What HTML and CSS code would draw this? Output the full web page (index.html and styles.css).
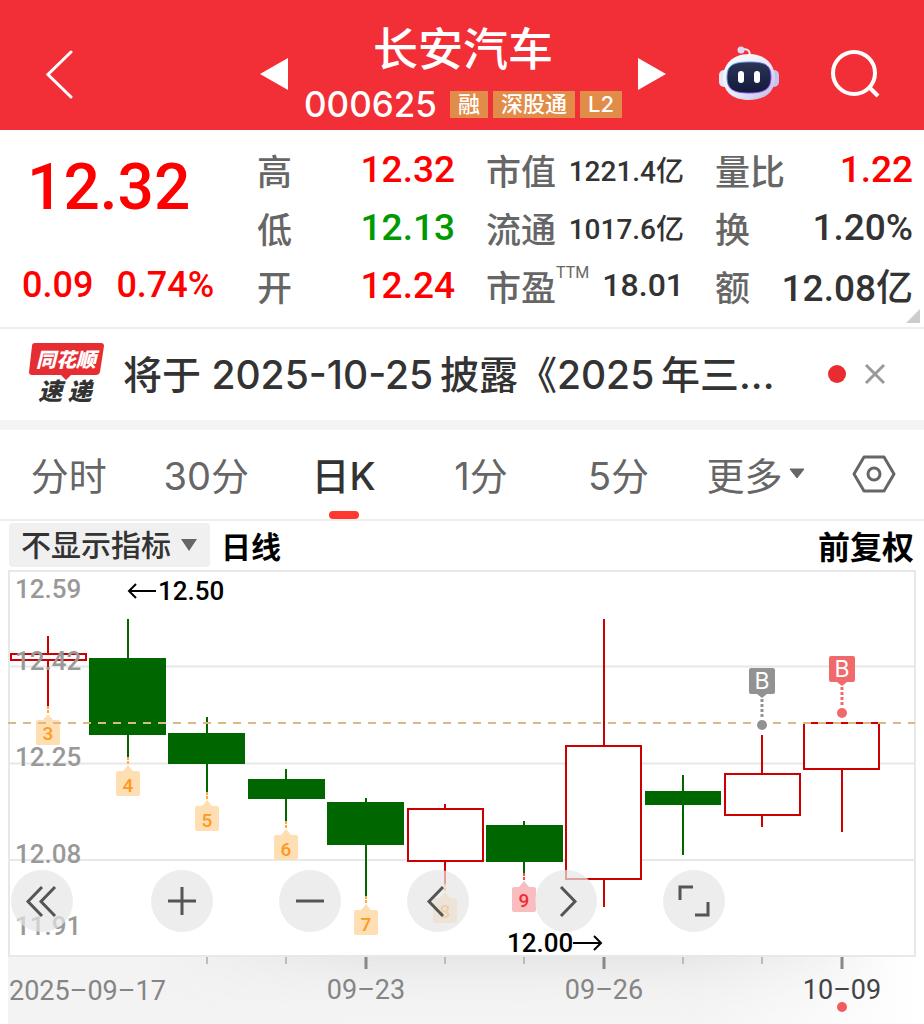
FILE: index.html
```
<!DOCTYPE html>
<html lang="zh-CN">
<head>
<meta charset="utf-8">
<meta name="viewport" content="width=device-width, initial-scale=1">
<title>长安汽车 000625</title>
<link rel="stylesheet" href="styles.css">
</head>
<body>
<header class="topbar">
  <button class="icon-btn back" aria-label="返回">
    <svg width="28" height="50" viewBox="0 0 28 50"><path d="M25 3 2 25.500 25 48" fill="none" stroke="#fff" stroke-width="3" stroke-linecap="round"/></svg>
  </button>
  <div class="stock">
    <button class="icon-btn" aria-label="上一只"><svg width="28" height="32" viewBox="0 0 28 32"><path d="M0 16 28 0V32Z" fill="#fff"/></svg></button>
    <div class="stock-id">
      <h1 class="stock-name">长安汽车</h1>
      <div class="stock-meta">
        <span class="code">000625</span>
        <span class="tag">融</span><span class="tag">深股通</span><span class="tag">L2</span>
      </div>
    </div>
    <button class="icon-btn" aria-label="下一只"><svg width="28" height="32" viewBox="0 0 28 32"><path d="M28 16 0 0V32Z" fill="#fff"/></svg></button>
  </div>
  <div class="tools">
    <button class="icon-btn" aria-label="智能助手">
      <svg width="60" height="56" viewBox="0 0 60 56">
        <defs>
          <linearGradient id="shell" x1="0" y1="0" x2="1" y2="1"><stop offset="0" stop-color="#fff"/><stop offset=".55" stop-color="#e9e9f8"/><stop offset="1" stop-color="#b9b8e6"/></linearGradient>
          <linearGradient id="rim" x1="0" y1="0" x2="1" y2="1"><stop offset="0" stop-color="#58d4ee"/><stop offset=".5" stop-color="#6a4be8"/><stop offset="1" stop-color="#b04af0"/></linearGradient>
          <linearGradient id="visor" x1="0" y1="0" x2="0" y2="1"><stop offset="0" stop-color="#2b3554"/><stop offset="1" stop-color="#121a3c"/></linearGradient>
        </defs>
        <path d="M22 4c6-2 9 0 9 6" fill="none" stroke="#eceaf6" stroke-width="2"/>
        <circle cx="22" cy="4" r="3.500" fill="#dcdcf2"/>
        <rect x="0" y="24" width="10" height="17" rx="5" fill="#e6e6f6"/>
        <rect x="50" y="24" width="10" height="17" rx="5" fill="#c4c3ea"/>
        <path d="M30 8C47 8 56 19 56 32S47 54 30 54 4 45 4 32 13 8 30 8Z" fill="url(#shell)"/>
        <path d="M30 16c16 0 22 3 22 15s-6 16-22 16S8 43 8 31s6-15 22-15Z" fill="url(#visor)" stroke="url(#rim)" stroke-width="1"/>
        <rect x="19" y="25" width="6" height="12" rx="3" fill="#fff"/>
        <rect x="35" y="25" width="6" height="12" rx="3" fill="#fff"/>
      </svg>
    </button>
    <button class="icon-btn" aria-label="搜索">
      <svg width="50" height="50" viewBox="0 0 50 50" fill="none" stroke="#fff" stroke-width="4"><circle cx="24" cy="24" r="21"/><path d="m39 38 9 9"/></svg>
    </button>
  </div>
</header>

<main>
<section class="quote">
  <div class="quote-main">
    <div class="price">12.32</div>
    <div class="change"><span>0.09</span><span>0.74%</span></div>
  </div>
  <dl class="stats">
    <div class="stat"><dt>高</dt><dd class="up">12.32</dd></div>
    <div class="stat"><dt>低</dt><dd class="down">12.13</dd></div>
    <div class="stat"><dt>开</dt><dd class="up">12.24</dd></div>
  </dl>
  <dl class="stats">
    <div class="stat"><dt>市值</dt><dd class="small">1221.4亿</dd></div>
    <div class="stat"><dt>流通</dt><dd class="small">1017.6亿</dd></div>
    <div class="stat"><dt>市盈<sup>TTM</sup></dt><dd class="medium">18.01</dd></div>
  </dl>
  <dl class="stats">
    <div class="stat"><dt>量比</dt><dd class="up">1.22</dd></div>
    <div class="stat"><dt>换</dt><dd>1.20%</dd></div>
    <div class="stat"><dt>额</dt><dd>12.08亿</dd></div>
  </dl>
  <svg class="corner" width="14" height="14" viewBox="0 0 14 14"><path d="M14 0V14H0Z" fill="#ccc"/></svg>
</section>

<section class="notice">
  <svg class="notice-logo" width="78" height="68" viewBox="0 0 78 68" role="img" aria-label="同花顺速递">
    <path d="M7 3H73q3 0 3 3L72 32q-1 3-4 3H43l-5 5-5-5H4q-3 0-3-3L4 6q0-3 3-3Z" fill="#e62e32"/>
    <text x="38" y="27" class="logo-top">同花顺</text>
    <text x="37" y="60" class="logo-bottom">速 递</text>
  </svg>
  <a class="notice-text" href="#">将于 2025-10-25&thinsp;披露《2025&thinsp;年三...</a>
  <span class="notice-dot"></span>
  <button class="icon-btn" aria-label="关闭"><svg width="22" height="22" viewBox="0 0 22 22"><path d="m2 2 18 18M20 2 2 20" stroke="#999" stroke-width="3"/></svg></button>
</section>

<nav class="tabs">
  <button class="tab">分时</button>
  <button class="tab">30分</button>
  <button class="tab active">日K</button>
  <button class="tab">1分</button>
  <button class="tab">5分</button>
  <button class="tab">更多<svg width="16" height="12" viewBox="0 0 16 12"><path d="M1 1H15L8 10Z" fill="#666" stroke="#666" stroke-linejoin="round"/></svg></button>
  <button class="tab" aria-label="设置"><svg width="44" height="38" viewBox="0 0 44 38" fill="none" stroke="#666"><path d="M12 2H32L42 19 32 36H12L2 19Z" stroke-width="3" stroke-linejoin="round"/><circle cx="22" cy="19" r="6" stroke-width="3"/></svg></button>
</nav>

<div class="chart-bar">
  <label class="indicator">
    <select aria-label="指标"><option>不显示指标</option></select>
    <svg width="18" height="14" viewBox="0 0 18 14"><path d="M1 1H17L9 13Z" fill="#666"/></svg>
  </label>
  <span class="period">日线</span>
  <span class="adjust">前复权</span>
</div>

<section class="chart">
  <svg class="kline" viewBox="0 570 924 454" role="img" aria-label="日K线图">
    <defs>
      <linearGradient id="axisBase"><stop offset="0" stop-color="#f3f3f3"/><stop offset=".75" stop-color="#f4f4f4"/><stop offset="1" stop-color="#fff"/></linearGradient>
      <linearGradient id="axisShade" x1="0" y1="0" x2="0" y2="1"><stop offset="0" stop-color="#e6e6e6"/><stop offset="1" stop-color="#f3f3f3" stop-opacity="0"/></linearGradient>
      <linearGradient id="sideFade"><stop offset="0" stop-color="#000"/><stop offset=".3" stop-color="#fff"/><stop offset=".7" stop-color="#fff"/><stop offset="1" stop-color="#000"/></linearGradient>
      <mask id="shadeMask" maskUnits="userSpaceOnUse" x="150" y="956" width="750" height="60"><rect x="150" y="956" width="750" height="60" fill="url(#sideFade)"/></mask>
      <g id="tag">
        <path d="M0 0V8" stroke-width="2" stroke-dasharray="3 1"/>
        <path d="M0 8 5 14H10q2 0 2 2V37q0 2-2 2H-10q-2 0-2-2V16q0-2 2-2H-5Z" stroke="none"/>
      </g>
      <g id="flag">
        <path d="M-11 0H11q2 0 2 2V24q0 2-2 2H5L0 30-5 26H-11q-2 0-2-2V2q0-2 2-2Z" stroke="none"/>
        <path d="M0 31V49" stroke-width="3" stroke-dasharray="3 2"/>
        <circle cx="0" cy="57" r="5" stroke="none"/>
      </g>
    </defs>
    <rect x="8" y="956" width="916" height="68" fill="url(#axisBase)"/>
    <rect x="150" y="956" width="750" height="60" fill="url(#axisShade)" mask="url(#shadeMask)"/>
    <g fill="none" stroke="#e8e8e8" stroke-width="2">
      <rect x="9" y="571" width="906" height="385"/>
      <path d="M9 666.500H915M9 763.500H915M9 860H915"/>
    </g>

    <g stroke="#060" stroke-width="3">
      <path d="M128 619V757M207 717V792M286 769V821M366 798V896M524 821V873M683 775V855" stroke-width="2"/>
      <path stroke="none" fill="#060" d="M89 658h77v77H89ZM168 733h77v31H168ZM248 779h77v20H248ZM327 802h77v43H327ZM486 825h77v37H486ZM645 791h76v14H645Z"/>
    </g>
    <g stroke="#c00" stroke-width="2">
      <path d="M48 636V653M48 661V706M445 804V808M445 862V884M604 619V745M604 880V907M762 735V773M762 816V827M842 770V832"/>
      <g fill="#fff">
        <rect x="11" y="654" width="75" height="6"/>
        <rect x="408" y="809" width="75" height="52"/>
        <rect x="566" y="746" width="75" height="133"/>
        <rect x="725" y="774" width="75" height="41"/>
        <rect x="804" y="723" width="75" height="46"/>
      </g>
    </g>

    <g fill="#fedfb4" stroke="#fa3">
      <use href="#tag" x="48" y="706"/><use href="#tag" x="128" y="757"/><use href="#tag" x="207" y="792"/>
      <use href="#tag" x="286" y="821"/><use href="#tag" x="366" y="896"/><use href="#tag" x="445" y="884"/>
    </g>
    <use href="#tag" x="524" y="873" fill="#f9bcbf" stroke="#f04c50"/>
    <path d="M8 723H915" stroke="#dab888" stroke-width="2" stroke-dasharray="8 7"/>
    <g class="tag-no">
      <text x="48" y="740">3</text><text x="128" y="792">4</text><text x="207" y="827">5</text>
      <text x="286" y="856">6</text><text x="366" y="931">7</text><text x="445" y="918">8</text>
      <text class="hot" x="524" y="907">9</text>
    </g>
    <use href="#flag" x="762" y="668" fill="#929292" stroke="#929292"/>
    <use href="#flag" x="842" y="656" fill="#f06a6c" stroke="#f06a6c"/>
    <g class="flag-text"><text x="762" y="689">B</text><text x="842" y="677">B</text></g>

    <g class="scale">
      <text x="15" y="598">12.59</text><text x="15" y="670">12.42</text><text x="15" y="766">12.25</text>
      <text x="15" y="863">12.08</text><text x="15" y="935">11.91</text>
    </g>
    <g class="extreme"><text x="158" y="600">12.50</text><text x="507" y="952">12.00</text></g>
    <path d="M156 591H129M136 584 129 591 136 598M573 943H601M594 936 601 943 594 950" fill="none" stroke="#000" stroke-width="2"/>

    <path d="M207 957V964M286 957V964M445 957V964M524 957V964M683 957V964M762 957V964" stroke="#bbb" stroke-width="2"/>
    <path d="M366 957V969M604 957V969M842 957V969" stroke="#888" stroke-width="3"/>
    <g class="dates">
      <text class="first" x="9" y="1000">2025–09–17</text><text x="366" y="999">09–23</text>
      <text x="604" y="999">09–26</text><text class="current" x="842" y="999">10–09</text>
    </g>
    <circle cx="842" cy="1007" r="5" fill="#f25c60"/>
  </svg>
  <div class="controls">
    <button class="round first" aria-label="最早"><svg viewBox="0 0 62 62"><path d="M31 17 17 31.500 31 46M44 17 30 31.500 44 46"/></svg></button>
    <button class="round" aria-label="放大"><svg viewBox="0 0 62 62"><path d="M17 31H45M31 17V45"/></svg></button>
    <button class="round" aria-label="缩小"><svg viewBox="0 0 62 62"><path d="M17 31H45"/></svg></button>
    <button class="round" aria-label="左移"><svg viewBox="0 0 62 62"><path d="M36 17 22 31.500 36 46"/></svg></button>
    <button class="round" aria-label="右移"><svg viewBox="0 0 62 62"><path d="M26 17 40 31.500 26 46"/></svg></button>
    <button class="round" aria-label="全屏"><svg viewBox="0 0 62 62"><path d="M17 30V17H30M32 45H45V32"/></svg></button>
  </div>
</section>
</main>
</body>
</html>
```
FILE: styles.css
```
* { box-sizing: border-box; }
body, h1, dl, dd { margin: 0; }
body {
  background: #fff;
  color: #333;
  font-family: Inter, "Noto Sans CJK SC", sans-serif;
}
button {
  padding: 0;
  border: 0;
  background: none;
  color: inherit;
  font: inherit;
}
svg { display: block; }

.topbar {
  display: grid;
  grid-template-columns: 1fr auto 1fr;
  align-items: center;
  height: 130px;
  padding: 18px 44px 0 46px;
  background: #f22f37;
  color: #fff;
}
.back { justify-self: start; }
.stock {
  display: flex;
  align-items: center;
  gap: 16px;
}
.stock-id { text-align: center; }
.stock-name {
  font-size: 45px;
  font-weight: 500;
  line-height: 60px;
}
.stock-meta {
  display: flex;
  align-items: center;
  gap: 5px;
  height: 48px;
}
.code {
  margin-right: 8px;
  font-size: 35px;
  font-weight: 500;
}
.tag {
  padding: 0 8px;
  background: #e28c49;
  font-size: 22px;
  font-weight: 500;
  line-height: 27px;
}
.tools {
  display: flex;
  align-items: center;
  justify-content: flex-end;
  gap: 51px;
}

.quote {
  position: relative;
  display: grid;
  grid-template-columns: 226fr 198fr 198fr 198fr;
  gap: 31px;
  padding: 10px 11px 13px 0;
  border-bottom: 2px solid #eee;
  font-family: Roboto, "Noto Sans CJK SC", sans-serif;
}
.quote-main {
  display: flex;
  flex-direction: column;
  justify-content: space-between;
  color: #f00;
  font-weight: 500;
}
.price {
  padding-left: 27px;
  font-size: 64px;
  line-height: 96px;
}
.change {
  display: flex;
  gap: 23px;
  padding-left: 22px;
  font-size: 36px;
  line-height: 58px;
}
.stat {
  display: flex;
  align-items: center;
  justify-content: space-between;
  height: 58px;
  white-space: nowrap;
}
.stat dt {
  color: #666;
  font-size: 35px;
  font-weight: 500;
}
.stat sup {
  font-size: 16px;
  font-weight: 400;
  vertical-align: 23px;
  line-height: 1;
}
.stat dd {
  font-size: 37px;
  font-weight: 500;
}
.stat .small { font-size: 28px; }
.stat .medium { font-size: 32px; }
.stat .up { color: #f00; }
.stat .down { color: #090; }
.corner {
  position: absolute;
  right: 4px;
  bottom: 4px;
}

.notice {
  display: flex;
  align-items: center;
  height: 101px;
  padding: 0 38px 2px 28px;
  border-bottom: 10px solid #f4f4f4;
}
.notice-logo { flex: none; }
.logo-top, .logo-bottom {
  font-family: "Noto Sans CJK SC", sans-serif;
  font-weight: 900;
  font-style: italic;
  text-anchor: middle;
}
.logo-top { font-size: 20px; fill: #fff; }
.logo-bottom { font-size: 24px; fill: #333; }
.notice-text {
  flex: 1;
  overflow: hidden;
  margin-left: 17px;
  padding-bottom: 4px;
  color: #333;
  font-size: 39px;
  font-weight: 500;
  text-decoration: none;
  white-space: nowrap;
}
.notice-dot {
  width: 18px;
  height: 18px;
  margin-right: 18px;
  border-radius: 50%;
  background: #e82c30;
}

.tabs {
  display: grid;
  grid-template-columns: repeat(6, 137fr) 99fr;
  height: 91px;
  border-bottom: 2px solid #eee;
}
.tab {
  position: relative;
  display: flex;
  align-items: center;
  justify-content: center;
  gap: 7px;
  padding-bottom: 2px;
  color: #666;
  font-size: 38px;
  white-space: nowrap;
}
.active {
  color: #333;
  font-weight: 500;
}
.active::after {
  content: "";
  position: absolute;
  bottom: 0;
  width: 30px;
  height: 8px;
  border-radius: 4px;
  background: #ff3830;
}

.chart-bar {
  display: flex;
  align-items: center;
  gap: 11px;
  height: 49px;
  padding: 0 10px 2px 9px;
  color: #000;
  font-size: 30px;
  font-weight: 600;
}
.indicator {
  display: flex;
  align-items: center;
  gap: 9px;
  height: 44px;
  padding: 0 12px;
  border-radius: 4px;
  background: #f0f0f0;
  font-weight: 500;
}
.indicator select {
  padding: 0;
  border: 0;
  appearance: none;
  background: none;
  color: #333;
  font: inherit;
}
.adjust {
  margin-left: auto;
  font-size: 32px;
}

.chart { position: relative; }
.kline {
  width: 100%;
  font-family: Roboto, sans-serif;
}
.scale { fill: #999; font-size: 26px; font-weight: 500; }
.extreme { fill: #000; font-size: 26px; font-weight: 500; }
.dates { fill: #858585; font-size: 27px; text-anchor: middle; }
.dates .first { text-anchor: start; }
.dates .current { fill: #444; }
.tag-no { fill: #f92; font-size: 19px; font-weight: 500; text-anchor: middle; }
.tag-no .hot { fill: #f02c34; }
.flag-text { fill: #fff; font-family: Inter, sans-serif; font-size: 23px; text-anchor: middle; }
.controls {
  position: absolute;
  bottom: 92px;
  left: 11px;
  display: flex;
  gap: 66px;
}
.round {
  width: 62px;
  height: 62px;
  border-radius: 50%;
  background: rgba(229, 229, 229, 0.7);
}
.round.first { margin-right: 12px; }
.round path {
  fill: none;
  stroke: #555;
  stroke-width: 3;
}
```
